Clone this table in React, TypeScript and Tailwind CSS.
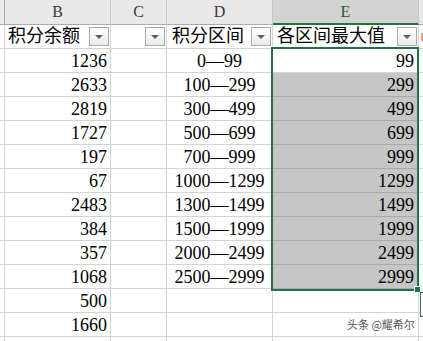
import React from 'react';

const serif = { fontFamily: '"Liberation Serif", "Noto Sans CJK SC", serif' };

const bVals = ['1236', '2633', '2819', '1727', '197', '67', '2483', '384', '357', '1068', '500', '1660', ''];
const dVals = ['0—99', '100—299', '300—499', '500—699', '700—999', '1000—1299', '1300—1499', '1500—1999', '2000—2499', '2500—2999', '', '', ''];
const eVals = ['99', '299', '499', '699', '999', '1299', '1499', '1999', '2499', '2999', '', '', ''];

function FilterButton() {
  return (
    <div className="ml-auto mr-[1px] flex h-[19px] w-[20px] shrink-0 items-center justify-center border border-[#ababab] bg-gradient-to-b from-white to-[#ebebeb]">
      <div className="h-0 w-0 border-l-[4px] border-r-[4px] border-t-[4px] border-l-transparent border-r-transparent border-t-[#5f5f5f]" />
    </div>
  );
}

function ColHeader({ label, selected }: { label: string; selected?: boolean }) {
  return (
    <div
      className={`flex items-center justify-center border-r border-[#c8c8c8] text-[16px] ${
        selected
          ? 'border-b-2 border-b-[#217346] bg-[#d3d3d3] text-[#1e5e38]'
          : 'border-b border-b-[#ababab] bg-[#e9e9e9] text-[#3a3a3a]'
      }`}
    >
      {label}
    </div>
  );
}

export default function App() {
  const cell = 'flex items-center border-r border-b border-[#d4d4d4] bg-white';

  return (
    <div className="relative h-[341px] w-[423px] overflow-hidden bg-white text-black" style={serif}>
      <div className="grid grid-cols-[5px_106px_56px_106px_146px_1fr] grid-rows-[25px_repeat(14,24px)]">
        {/* column headers */}
        <div className="border-r border-b border-[#ababab] bg-[#e9e9e9]" />
        <ColHeader label="B" />
        <ColHeader label="C" />
        <ColHeader label="D" />
        <ColHeader label="E" selected />
        <div className="border-b border-[#ababab] bg-[#e9e9e9]" />

        {/* title row */}
        <div className={cell} />
        <div className={`${cell} pl-[3px] text-[18px]`}>
          <span>积分余额</span>
          <FilterButton />
        </div>
        <div className={cell}>
          <FilterButton />
        </div>
        <div className={`${cell} pl-[5px] text-[18px]`}>
          <span>积分区间</span>
          <FilterButton />
        </div>
        <div className={`${cell} pl-[4px] text-[18px]`}>
          <span>各区间最大值</span>
          <FilterButton />
        </div>
        <div className="flex items-center border-b border-[#d4d4d4] pl-[2px]">
          <div className="h-[8px] w-[2px] bg-[#e0a080]" />
        </div>

        {/* data rows */}
        {bVals.map((b, i) => {
          const shaded = i >= 1 && i <= 9;
          return (
            <React.Fragment key={i}>
              <div className={cell} />
              <div className={`${cell} justify-end pr-[3px] pt-[1px] text-[18px]`}>{b}</div>
              <div className={cell} />
              <div className={`${cell} justify-center pt-[1px] text-[18px]`}>{dVals[i]}</div>
              <div
                className={`flex items-center justify-end border-r border-b pr-[4px] pt-[1px] text-[18px] ${
                  shaded ? 'border-[#a9a9a9] bg-[#c6c6c6]' : 'border-[#d4d4d4] bg-white'
                }`}
              >
                {eVals[i]}
              </div>
              <div className="border-b border-[#d4d4d4]" />
            </React.Fragment>
          );
        })}
      </div>

      {/* selection box E3:E12 */}
      <div className="pointer-events-none absolute left-[271px] top-[47px] h-[244px] w-[148px] border-2 border-[#217346]" />
      {/* fill handle */}
      <div className="absolute left-[414px] top-[286px] h-[7px] w-[7px] border border-white bg-[#217346]" />
      {/* quick analysis button */}
      <div className="absolute left-[420px] top-[292px] h-[25px] w-[12px] border border-[#3b6b4f] bg-white" />

      {/* watermark */}
      <div
        className="absolute left-[347px] top-[317px] text-[11px] leading-[14px] text-[#555]"
        style={{ fontFamily: '"Noto Sans CJK SC", "Noto Sans", sans-serif' }}
      >
        头条 @耀希尔
      </div>
    </div>
  );
}
